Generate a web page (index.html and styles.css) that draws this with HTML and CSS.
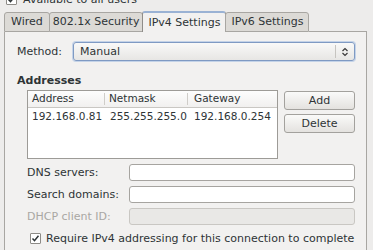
FILE: index.html
```html
<!DOCTYPE html>
<html lang="en">
<head>
  <meta charset="UTF-8">
  <title>Editing Wired connection - IPv4 Settings</title>
  <link rel="stylesheet" href="styles.css">
</head>
<body>
  <!-- "Available to all users" row, mostly scrolled off the top -->
  <div class="avail-row">
    <span class="check">
      <svg viewBox="0 0 11 11" width="11" height="11"><path d="M2.5 5.5l2 2.2 4-5" stroke="#2e3436" stroke-width="1.5" fill="none"/></svg>
    </span>
    <span>Available to all users</span>
  </div>

  <div class="notebook">
    <div class="tabs">
      <div class="tab tab-wired">Wired</div>
      <div class="tab tab-security">802.1x Security</div>
      <div class="tab tab-active">IPv4 Settings</div>
      <div class="tab">IPv6 Settings</div>
      <div class="tab-fill"></div>
    </div>

    <div class="page">
      <div class="method-row">
        <label class="method-label">Method:</label>
        <div class="combo">
          <span class="combo-text">Manual</span>
          <span class="combo-arrow">
            <svg viewBox="0 0 8 10" width="8" height="10"><path d="M1.5 4l2.5-2.5 2.5 2.5M1.5 6l2.5 2.5 2.5-2.5" stroke="#3a3a3a" stroke-width="1.2" fill="none"/></svg>
          </span>
        </div>
      </div>

      <h2 class="section-title">Addresses</h2>

      <div class="addresses">
        <div class="addr-table">
          <div class="addr-head">
            <span class="col col-1">Address</span>
            <span class="col col-2">Netmask</span>
            <span class="col col-3">Gateway</span>
          </div>
          <div class="addr-row">
            <span class="col col-1">192.168.0.81</span>
            <span class="col col-2">255.255.255.0</span>
            <span class="col col-3">192.168.0.254</span>
          </div>
        </div>
        <div class="addr-buttons">
          <button class="btn">Add</button>
          <button class="btn">Delete</button>
        </div>
      </div>

      <div class="form">
        <label>DNS servers:</label>
        <div class="entry"></div>
        <label>Search domains:</label>
        <div class="entry"></div>
        <label class="disabled">DHCP client ID:</label>
        <div class="entry entry-disabled"></div>
      </div>

      <div class="require-row">
        <span class="check">
          <svg viewBox="0 0 11 11" width="11" height="11"><path d="M2.5 5.5l2 2.2 4-5" stroke="#2e3436" stroke-width="1.5" fill="none"/></svg>
        </span>
        <span>Require IPv4 addressing for this connection to complete</span>
      </div>

      <div class="routes-row">
        <button class="btn">Routes…</button>
      </div>
    </div>
  </div>
</body>
</html>
```

FILE: styles.css
```css
body {
  margin: 0;
  background: #edeceb;
  font-family: "DejaVu Sans", Verdana, sans-serif;
  font-size: 11px;
  color: #2e3436;
  overflow: hidden;
}

/* shared checkbox look */
.check {
  width: 11px;
  height: 11px;
  box-sizing: border-box;
  border: 1px solid #8d8b87;
  background: #fff;
  border-radius: 1px;
  display: flex;
  align-items: center;
  justify-content: center;
}
.check svg {
  flex: none;
}

.avail-row {
  display: flex;
  align-items: center;
  gap: 6px;
  height: 14px;
  margin-top: -8px;
  padding-left: 6px;
}

/* Notebook with tabs */
.notebook {
  margin: 5px 0 0 4px;
  width: 363px;
}

.tabs {
  display: flex;
  align-items: flex-end;
  height: 21px;
}
.tab {
  height: 18px;
  padding: 0 5px;
  line-height: 18px;
  background: #dcdad6;
  border: 1px solid #a8a6a2;
  border-radius: 3px 3px 0 0;
  margin-right: -1px;
  white-space: nowrap;
}
.tab-wired {
  padding: 0 6px;
}
.tab-security {
  padding: 0 3px;
}
.tab-active {
  height: 19px;
  line-height: 19px;
  background: #f2f1f0;
  border-color: #8f8d89;
  border-bottom: none;
  border-top: 2px solid #9ab2d4;
  padding: 0 5px;
}
.tab-fill {
  flex: 1;
  border-bottom: 1px solid #a8a6a2;
  margin-left: 1px;
}

.page {
  background: #f2f1f0;
  border: 1px solid #a8a6a2;
  border-top: none;
  padding: 10px 11px 0 12px;
  height: 230px;
  box-sizing: border-box;
}

/* Method combo */
.method-row {
  display: flex;
  align-items: center;
}
.method-label {
  width: 56px;
}
.combo {
  flex: 1;
  height: 19px;
  box-sizing: border-box;
  border: 1px solid #7f9ac3;
  border-radius: 3px;
  background: linear-gradient(#f9f9f8, #e7e6e4);
  display: flex;
  align-items: center;
  box-shadow: 0 0 0 1px #c4d3e8;
}
.combo-text {
  flex: 1;
  padding-left: 6px;
}
.combo-arrow {
  width: 18px;
  height: 13px;
  border-left: 1px solid #c6c4c0;
  display: flex;
  align-items: center;
  justify-content: center;
}

.section-title {
  font-size: 11px;
  font-weight: bold;
  margin: 13px 0 2px;
  line-height: 14px;
}

/* Addresses table + buttons */
.addresses {
  display: flex;
  gap: 6px;
  padding-left: 10px;
}
.addr-table {
  width: 251px;
  height: 69px;
  box-sizing: border-box;
  border: 1px solid #9d9b97;
  background: #fff;
  font-size: 10.5px;
}
.addr-head,
.addr-row {
  display: flex;
}
.addr-head {
  height: 16px;
  border-bottom: 1px solid #c9c7c3;
  background: linear-gradient(#fdfdfd, #f1f0ef);
}
.addr-row {
  height: 17px;
  line-height: 17px;
}
.col {
  padding-left: 4px;
  white-space: nowrap;
  box-sizing: border-box;
}
.col-1 { width: 77px; }
.col-2 { width: 83px; }
.col-3 { flex: 1; }
.addr-head .col-1,
.addr-head .col-2 {
  border-right: 1px solid #cfcdc9;
  margin: 2px 0;
  line-height: 11px;
}
.addr-head .col-3 {
  line-height: 15px;
  padding-left: 6px;
}
.addr-row .col-2 { padding-left: 5px; }
.addr-row .col-3 { padding-left: 6px; }

.addr-buttons {
  flex: 1;
  display: flex;
  flex-direction: column;
  gap: 4px;
  margin-top: 1px;
}
.btn {
  font: inherit;
  color: #2e3436;
  height: 19px;
  padding: 0;
  border: 1px solid #a3a19d;
  border-radius: 3px;
  background: linear-gradient(#fafaf9, #e4e2df);
}

/* Entries */
.form {
  display: grid;
  grid-template-columns: 102px 1fr;
  row-gap: 5px;
  align-items: center;
  padding-left: 10px;
  margin-top: 5px;
}
.entry {
  height: 17px;
  box-sizing: border-box;
  border: 1px solid #a6a4a0;
  border-radius: 3px;
  background: #fff;
}
.entry-disabled {
  background: #e9e8e6;
  border-color: #c9c7c3;
}
.disabled {
  color: #a9a7a3;
}

.require-row {
  display: flex;
  align-items: center;
  gap: 5px;
  padding-left: 13px;
  margin-top: 7px;
  height: 13px;
}

.routes-row {
  display: flex;
  justify-content: flex-end;
  margin-top: 9px;
}
.routes-row .btn {
  width: 71px;
}
```
